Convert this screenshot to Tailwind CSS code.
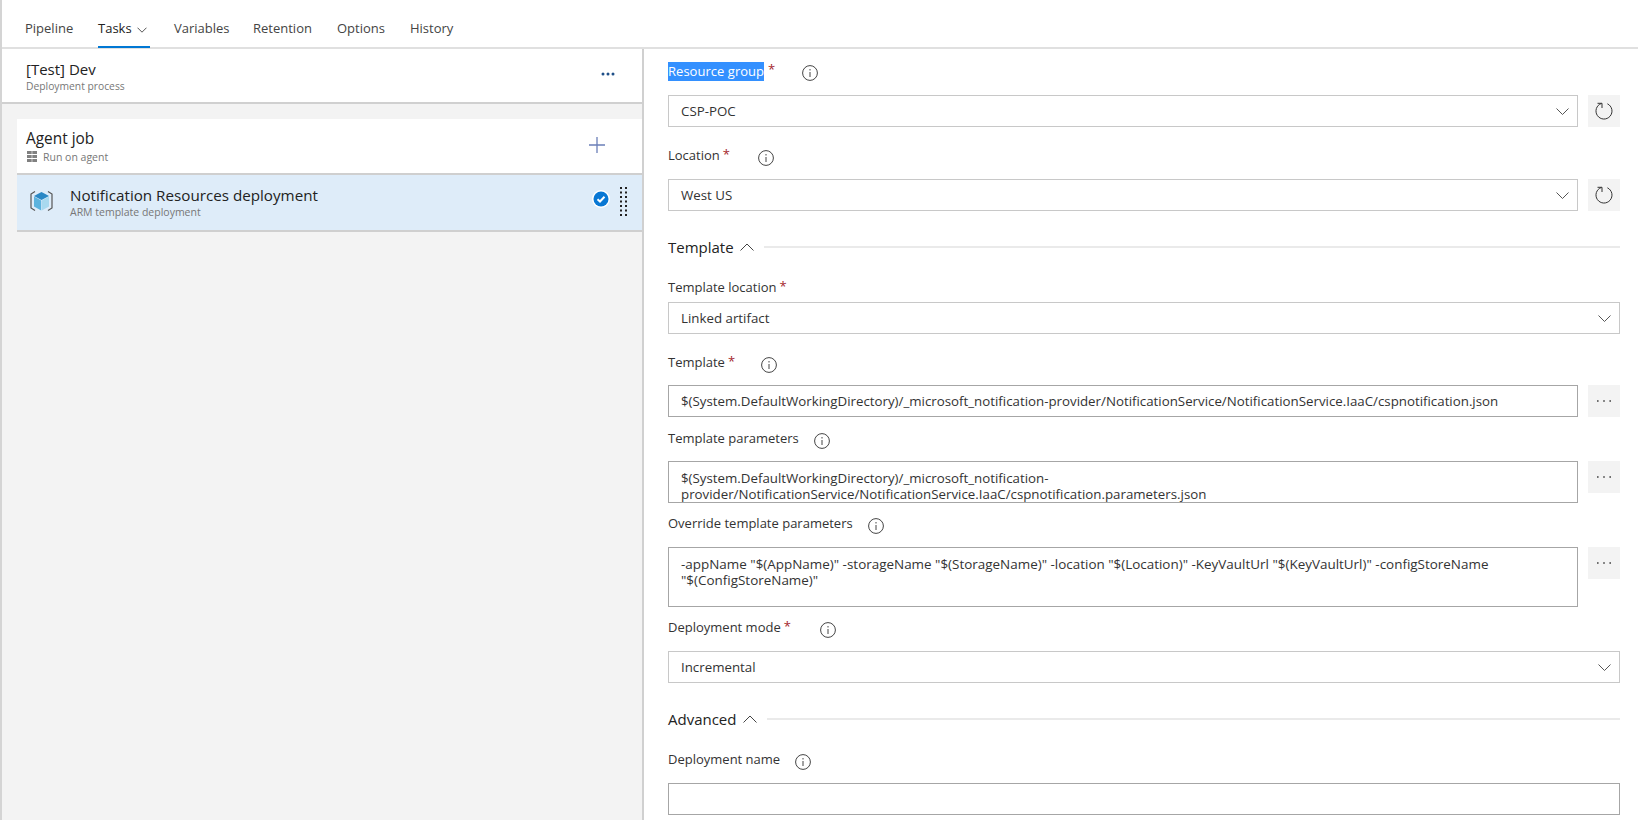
<!DOCTYPE html>
<html>
<head>
<meta charset="utf-8">
<script src="https://cdn.jsdelivr.net/npm/@tailwindcss/browser@4"></script>
</head>
<body class="bg-white">
<div class="w-[1638px] h-[820px] overflow-hidden flex flex-col font-['Open_Sans',sans-serif] text-[13.3px] text-[#333] border-l-2 border-l-[#d4d4d4]">
  <nav class="h-[49px] shrink-0 border-b-2 border-[#e0e0e0] flex items-stretch pl-[23px] text-[#444] text-[13px]">
    <div class="flex items-center w-[73px] pt-[11px]">Pipeline</div>
    <div class="flex items-center w-[76px] pt-[11px] relative text-[#222]">Tasks
      <svg class="ml-[5px] mt-[1px]" width="10" height="6" viewBox="0 0 10 6" fill="none" stroke="#555"><path d="M.5.7 5 5.200 9.500.7"/></svg>
      <span class="absolute left-0 bottom-[-1px] w-[52px] h-[2px] bg-[#0078d4]"></span>
    </div>
    <div class="flex items-center w-[79px] pt-[11px]">Variables</div>
    <div class="flex items-center w-[84px] pt-[11px]">Retention</div>
    <div class="flex items-center w-[73px] pt-[11px]">Options</div>
    <div class="flex items-center pt-[11px]">History</div>
  </nav>
  <div class="flex flex-1 min-h-0">
    <aside class="w-[642px] shrink-0 bg-[#f3f3f3] border-r-2 border-[#d0d0d0] flex flex-col">
      <header class="h-[55px] bg-white border-b-2 border-[#d0d0d0] pl-[24px] pr-[27px] flex items-center justify-between">
        <div class="pt-[1px]">
          <div class="text-[15px] leading-[20px] text-[#222]">[Test] Dev</div>
          <div class="text-[10.3px] leading-[14px] text-[#777]">Deployment process</div>
        </div>
        <svg width="14" height="4" viewBox="0 0 14 4" fill="#1f4f88" class="mb-[3px]"><circle cx="2" cy="2" r="1.500"/><circle cx="7" cy="2" r="1.500"/><circle cx="12" cy="2" r="1.500"/></svg>
      </header>
      <section class="mt-[15px] ml-[15px]">
        <div class="h-[56px] bg-white border-b-2 border-[#cfcfcf] pl-[9px] pr-[37px] flex items-center justify-between">
          <div>
            <div class="text-[15.4px] leading-[20px] text-[#222]">Agent job</div>
            <div class="flex items-center text-[10.5px] leading-[14px] text-[#777] pt-[1px]">
              <svg class="ml-[1px] mr-[6px]" width="10" height="11" viewBox="0 0 10 11" fill="#808080"><path d="M0 0h4.700v3H0zM5.300 0H10v3H5.300zM0 4h4.700v3H0zM5.300 4H10v3H5.300zM0 8h4.700v3H0zM5.300 8H10v3H5.300z"/></svg>
              Run on agent
            </div>
          </div>
          <svg class="mb-[2px]" width="16" height="16" viewBox="0 0 16 16" stroke="#6b7fb8" stroke-width="1.300"><path d="M8 0v16M0 8h16"/></svg>
        </div>
        <div class="h-[57px] bg-[#deecf9] border-b-2 border-[#cfcfcf] pl-[12px] pr-[14px] flex items-center">
          <svg class="shrink-0 mb-[2px]" width="26" height="26" viewBox="0 0 26 26" fill="none">
            <path d="M6 2.500 2 5V19L6 21.500M19 2.500 23 5V19L19 21.500" stroke="#555" stroke-width="1.200"/>
            <path d="M12.500 3 20 7 12.500 11 5 7z" fill="#2a88c5"/>
            <path d="M5 7.600 12.200 11.500V21.500L5 17.500z" fill="#5cb3de"/>
            <path d="M20 7.600 12.800 11.500V21.500L20 17.500z" fill="#a8d9ef"/>
          </svg>
          <div class="ml-[15px] flex-1 pb-[1px]">
            <div class="text-[15.2px] leading-[20px] text-[#222]">Notification Resources deployment</div>
            <div class="text-[10.5px] leading-[14px] text-[#777]">ARM template deployment</div>
          </div>
          <svg class="mr-[10px] mb-[7px]" width="18" height="18" viewBox="0 0 18 18" fill="none"><circle cx="9" cy="9" r="9" fill="#fff"/><circle cx="9" cy="9" r="7.500" fill="#0a78d4"/><path d="M5.500 9.300 8 11.500 12.500 6.800" stroke="#fff" stroke-width="2"/></svg>
          <svg class="mb-[3px]" width="8" height="29" viewBox="0 0 8 29" fill="#222"><path d="M0 0h2v2H0zM5 0h2v2H5zM0 4.500h2v2H0zM5 4.500h2v2H5zM0 9h2v2H0zM5 9h2v2H5zM0 13.500h2v2H0zM5 13.500h2v2H5zM0 18h2v2H0zM5 18h2v2H5zM0 22.500h2v2H0zM5 22.500h2v2H5zM0 27h2v2H0zM5 27h2v2H5z"/></svg>
        </div>
      </section>
    </aside>
    <main class="flex-1 pl-[24px] pr-[18px] flex flex-col">
      <!-- Resource group -->
      <div class="mt-[11px] h-[20px] pt-[2px] flex items-center text-[13px]">
        <span class="bg-[#3390ff] text-white leading-[19px] tracking-[0.03px]">Resource group</span><span class="ml-[4px] mb-[2px] text-[#a4262c]">*</span>
        <svg class="ml-[27px] mt-[3px]" width="16" height="16" viewBox="0 0 16 16" fill="none" stroke="#444"><circle cx="8" cy="8" r="7.400"/><path d="M8 7v5M8 4v1.500"/></svg>
      </div>
      <div class="mt-[15px] flex gap-[10px]">
        <div class="flex-1 h-[32px] pt-[2px] border border-[#c8c8c8] flex items-center justify-between pl-[12px] pr-[8px]">CSP-POC
          <svg class="mb-[1px]" width="13" height="7" viewBox="0 0 13 7" fill="none" stroke="#555"><path d="M.5.500 6.500 6.500 12.500.5"/></svg>
        </div>
        <div class="w-[32px] h-[32px] bg-[#f3f3f3] flex items-center justify-center">
          <svg width="18" height="18" viewBox="0 0 18 18" fill="none" stroke="#333"><path d="M12.400 1.800A8 8 0 1 1 6.300 1.500"/><path d="M2.500 1.300H7V6"/></svg>
        </div>
      </div>
      <!-- Location -->
      <div class="mt-[18px] h-[20px] pt-[2px] flex items-center text-[13px]">
        <span>Location</span><span class="ml-[3px] mb-[2px] text-[#a4262c]">*</span>
        <svg class="ml-[28px] mt-[3px]" width="16" height="16" viewBox="0 0 16 16" fill="none" stroke="#444"><circle cx="8" cy="8" r="7.400"/><path d="M8 7v5M8 4v1.500"/></svg>
      </div>
      <div class="mt-[14px] flex gap-[10px]">
        <div class="flex-1 h-[32px] pt-[2px] border border-[#c8c8c8] flex items-center justify-between pl-[12px] pr-[8px]">West US
          <svg class="mb-[1px]" width="13" height="7" viewBox="0 0 13 7" fill="none" stroke="#555"><path d="M.5.500 6.500 6.500 12.500.5"/></svg>
        </div>
        <div class="w-[32px] h-[32px] bg-[#f3f3f3] flex items-center justify-center">
          <svg width="18" height="18" viewBox="0 0 18 18" fill="none" stroke="#333"><path d="M12.400 1.800A8 8 0 1 1 6.300 1.500"/><path d="M2.500 1.300H7V6"/></svg>
        </div>
      </div>
      <!-- Template section -->
      <div class="mt-[26px] h-[20px] flex items-center text-[15px] text-[#222]">
        <span>Template</span>
        <svg class="ml-[6px]" width="14" height="8" viewBox="0 0 14 8" fill="none" stroke="#444"><path d="M.5 7.500 7 1 13.500 7.500"/></svg>
        <div class="ml-[10px] flex-1 h-[2px] bg-[#eaeaea]"></div>
      </div>
      <div class="mt-[20px] h-[20px] pt-[2px] flex items-center text-[13px]">
        <span>Template location</span><span class="ml-[3px] mb-[2px] text-[#a4262c]">*</span>
      </div>
      <div class="mt-[5px] h-[32px] pt-[2px] border border-[#c8c8c8] flex items-center justify-between pl-[12px] pr-[8px]">Linked artifact
        <svg class="mb-[1px]" width="13" height="7" viewBox="0 0 13 7" fill="none" stroke="#555"><path d="M.5.500 6.500 6.500 12.500.5"/></svg>
      </div>
      <!-- Template -->
      <div class="mt-[18px] h-[20px] pt-[2px] flex items-center text-[13px]">
        <span>Template</span><span class="ml-[3px] mb-[2px] text-[#a4262c]">*</span>
        <svg class="ml-[26px] mt-[3px]" width="16" height="16" viewBox="0 0 16 16" fill="none" stroke="#444"><circle cx="8" cy="8" r="7.400"/><path d="M8 7v5M8 4v1.500"/></svg>
      </div>
      <div class="mt-[13px] flex gap-[10px]">
        <div class="flex-1 h-[32px] pt-[2px] border border-[#a6a6a6] flex items-center pl-[12px] whitespace-nowrap">$(System.DefaultWorkingDirectory)/_microsoft_notification-provider/NotificationService/NotificationService.IaaC/cspnotification.json</div>
        <div class="w-[32px] h-[32px] bg-[#f3f3f3] flex items-center justify-center">
          <svg width="14" height="2" viewBox="0 0 14 2" fill="#444"><path d="M0 .2h1.600v1.600H0zM6.200.2h1.600v1.600H6.200zM12.400.2H14v1.600h-1.600z"/></svg>
        </div>
      </div>
      <!-- Template parameters -->
      <div class="mt-[11px] h-[20px] pt-[2px] flex items-center text-[13px]">
        <span>Template parameters</span>
        <svg class="ml-[15px] mt-[3px]" width="16" height="16" viewBox="0 0 16 16" fill="none" stroke="#444"><circle cx="8" cy="8" r="7.400"/><path d="M8 7v5M8 4v1.500"/></svg>
      </div>
      <div class="mt-[13px] flex gap-[10px]">
        <div class="flex-1 h-[42px] border border-[#a6a6a6] overflow-hidden pl-[12px] pr-[12px] pt-[8px] leading-[16px]">$(System.DefaultWorkingDirectory)/_microsoft_notification-<br>provider/NotificationService/NotificationService.IaaC/cspnotification.parameters.json</div>
        <div class="w-[32px] h-[32px] bg-[#f3f3f3] flex items-center justify-center">
          <svg width="14" height="2" viewBox="0 0 14 2" fill="#444"><path d="M0 .2h1.600v1.600H0zM6.200.2h1.600v1.600H6.200zM12.400.2H14v1.600h-1.600z"/></svg>
        </div>
      </div>
      <!-- Override -->
      <div class="mt-[10px] h-[20px] pt-[2px] flex items-center text-[13px]">
        <span>Override template parameters</span>
        <svg class="ml-[15px] mt-[3px]" width="16" height="16" viewBox="0 0 16 16" fill="none" stroke="#444"><circle cx="8" cy="8" r="7.400"/><path d="M8 7v5M8 4v1.500"/></svg>
      </div>
      <div class="mt-[14px] flex gap-[10px]">
        <div class="flex-1 h-[60px] border border-[#a6a6a6] pl-[12px] pr-[12px] pt-[8px] leading-[16px] text-[13.45px]">-appName "$(AppName)" -storageName "$(StorageName)" -location "$(Location)" -KeyVaultUrl "$(KeyVaultUrl)" -configStoreName<br>"$(ConfigStoreName)"</div>
        <div class="w-[32px] h-[32px] bg-[#f3f3f3] flex items-center justify-center">
          <svg width="14" height="2" viewBox="0 0 14 2" fill="#444"><path d="M0 .2h1.600v1.600H0zM6.200.2h1.600v1.600H6.200zM12.400.2H14v1.600h-1.600z"/></svg>
        </div>
      </div>
      <!-- Deployment mode -->
      <div class="mt-[10px] h-[20px] pt-[2px] flex items-center text-[13px]">
        <span>Deployment mode</span><span class="ml-[3px] mb-[2px] text-[#a4262c]">*</span>
        <svg class="ml-[29px] mt-[3px]" width="16" height="16" viewBox="0 0 16 16" fill="none" stroke="#444"><circle cx="8" cy="8" r="7.400"/><path d="M8 7v5M8 4v1.500"/></svg>
      </div>
      <div class="mt-[14px] h-[32px] pt-[2px] border border-[#c8c8c8] flex items-center justify-between pl-[12px] pr-[8px]">Incremental
        <svg class="mb-[1px]" width="13" height="7" viewBox="0 0 13 7" fill="none" stroke="#555"><path d="M.5.500 6.500 6.500 12.500.5"/></svg>
      </div>
      <!-- Advanced -->
      <div class="mt-[26px] h-[20px] flex items-center text-[15px] text-[#222]">
        <span>Advanced</span>
        <svg class="ml-[7px]" width="14" height="8" viewBox="0 0 14 8" fill="none" stroke="#444"><path d="M.5 7.500 7 1 13.500 7.500"/></svg>
        <div class="ml-[10px] flex-1 h-[2px] bg-[#eaeaea]"></div>
      </div>
      <div class="mt-[20px] h-[20px] pt-[2px] flex items-center text-[13px]">
        <span>Deployment name</span>
        <svg class="ml-[15px] mt-[3px]" width="16" height="16" viewBox="0 0 16 16" fill="none" stroke="#444"><circle cx="8" cy="8" r="7.400"/><path d="M8 7v5M8 4v1.500"/></svg>
      </div>
      <div class="mt-[14px] h-[32px] border border-[#a6a6a6]"></div>
    </main>
  </div>
</div>
</body>
</html>
